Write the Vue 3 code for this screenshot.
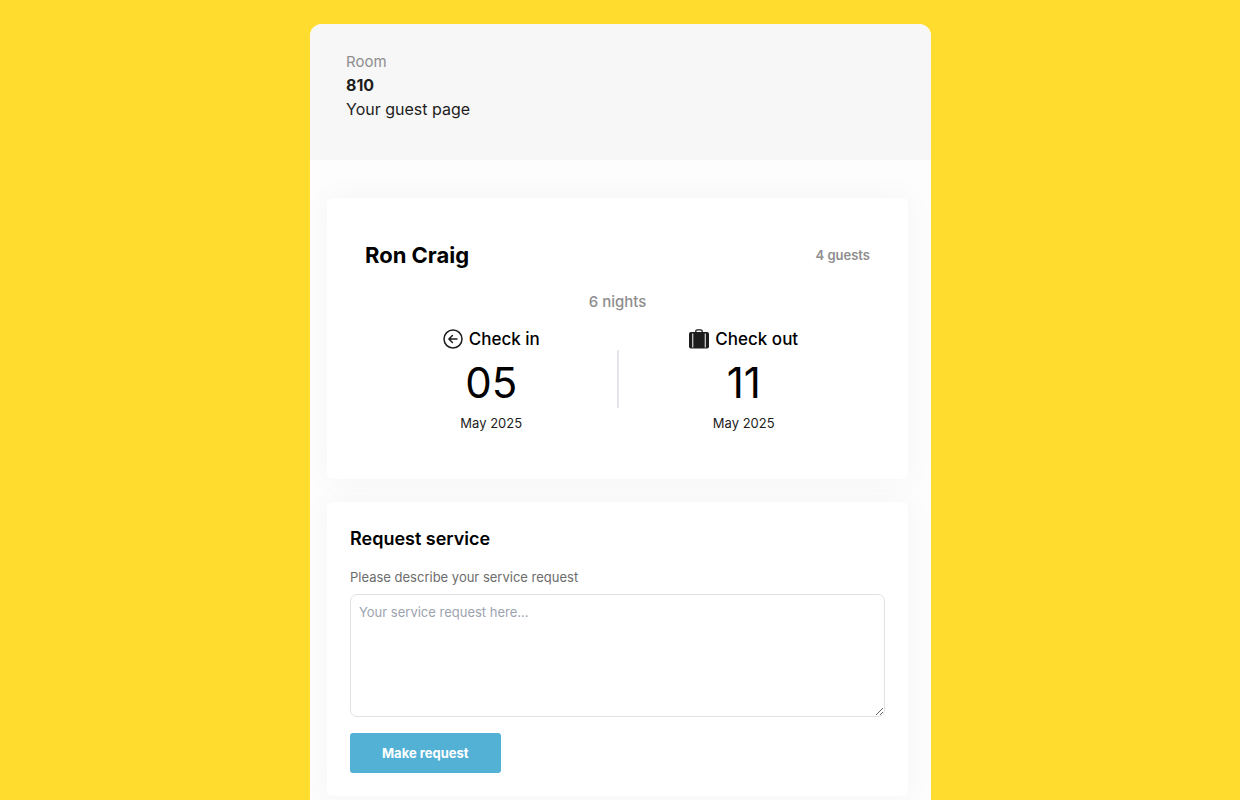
<script setup>
import { ref } from 'vue'

const room = '810'
const guest = { name: 'Ron Craig', party: '4 guests', nights: '6 nights' }
const stay = [
  { id: 'in', label: 'Check in', day: '05', month: 'May 2025' },
  { id: 'out', label: 'Check out', day: '11', month: 'May 2025' },
]
const message = ref('')
</script>

<template>
  <main class="page">
    <header class="room">
      <p class="room-label">Room</p>
      <p class="room-number">{{ room }}</p>
      <p class="room-title">Your guest page</p>
    </header>

    <div class="cards">
      <section class="card booking">
        <div class="booking-head">
          <h1>{{ guest.name }}</h1>
          <span class="party">{{ guest.party }}</span>
        </div>
        <p class="nights">{{ guest.nights }}</p>
        <div class="stay">
          <div v-for="s in stay" :key="s.id" class="stop">
            <h2>
              <svg v-if="s.id === 'in'" class="icon" viewBox="0 0 20 20" fill="none" stroke="#1d1d1d" stroke-width="1.5" stroke-linecap="round" stroke-linejoin="round" aria-hidden="true">
                <circle cx="10" cy="10" r="9" />
                <path d="M14 10H6M9.400 6.500L5.900 10l3.500 3.500" />
              </svg>
              <svg v-else class="icon" viewBox="0 0 20 20" aria-hidden="true">
                <path d="M6.800 4V2.300Q6.800 .8 8.300 .8h3.400q1.500 0 1.500 1.500V4" fill="none" stroke="#1d1d1d" stroke-width="1.300" />
                <rect x="0" y="3" width="20" height="16.500" rx="2" fill="#1d1d1d" />
                <path d="M3.700 4.500v14M16.300 4.500v14" stroke="#c8c8c8" stroke-width="1.300" />
              </svg>
              {{ s.label }}
            </h2>
            <p class="day">{{ s.day }}</p>
            <p class="month">{{ s.month }}</p>
          </div>
        </div>
      </section>

      <form class="card request" @submit.prevent>
        <h2>Request service</h2>
        <label for="message">Please describe your service request</label>
        <textarea id="message" v-model="message" placeholder="Your service request here..."></textarea>
        <button type="submit">Make request</button>
      </form>
    </div>
  </main>
</template>

<style>
body {
  margin: 0;
  background: #ffdc2e;
}
</style>

<style scoped>
.page {
  box-sizing: border-box;
  width: calc(50% + 1px);
  margin: 24px 0 0 25%;
  background: #fdfdfd;
  border-radius: 12px 12px 0 0;
  overflow: hidden;
  font-family: Inter, "Liberation Sans", sans-serif;
  color: #000;
}
h1, h2, p {
  margin: 0;
}
.room {
  padding: 26px 36px 38px;
  background: #f7f7f7;
  line-height: 24px;
  color: #1d1d1d;
}
.room-label {
  font-size: 15px;
  color: #8e8e8e;
}
.room-number {
  font-size: 16px;
  line-height: 22px;
  font-weight: 700;
}
.room-title {
  font-size: 16px;
  line-height: 26px;
}
.cards {
  display: flex;
  flex-direction: column;
  gap: 23px;
  padding: 38px 23px 24px 17px;
}
.card {
  background: #fff;
  border-radius: 6px;
  box-shadow: 0 0 32px rgba(0, 0, 0, 0.04);
}
.booking {
  padding: 40px 38px 46px;
}
.booking-head {
  display: flex;
  align-items: center;
  justify-content: space-between;
}
h1 {
  font-size: 22px;
  line-height: 34px;
  font-weight: 700;
}
.party {
  font-size: 13px;
  font-weight: 600;
  color: #8e8e8e;
}
.nights {
  margin-top: 16px;
  font-size: 15px;
  line-height: 28px;
  font-weight: 500;
  color: #8e8e8e;
  text-align: center;
}
.stay {
  display: grid;
  grid-template-columns: 1fr 1fr;
  margin-top: 11px;
  background: linear-gradient(#e5e5ec, #e5e5ec) center 23px / 2px 58px no-repeat;
}
.stop {
  text-align: center;
}
.stop h2 {
  display: flex;
  align-items: center;
  justify-content: center;
  gap: 6px;
  font-size: 17px;
  line-height: 24px;
  font-weight: 500;
}
.icon {
  width: 20px;
  height: 20px;
}
.day {
  margin-top: 6px;
  font-size: 42px;
  line-height: 52px;
}
.month {
  margin-top: 4px;
  font-size: 13px;
  line-height: 20px;
  color: #1d1d1d;
}
.request {
  display: flex;
  flex-direction: column;
  align-items: flex-start;
  padding: 23px;
}
.request h2 {
  font-size: 18px;
  line-height: 28px;
  font-weight: 600;
}
.request label {
  margin-top: 14px;
  font-size: 13px;
  line-height: 20px;
  color: #6c6c6c;
}
.request textarea {
  box-sizing: border-box;
  width: 100%;
  height: 123px;
  margin-top: 7px;
  padding: 7px 8px;
  border: 1px solid #e1e1e8;
  border-radius: 7px;
  background: #fff;
  font: 13px/20px Inter, "Liberation Sans", sans-serif;
  resize: vertical;
}
.request textarea::placeholder {
  color: #9ca3af;
}
.request button {
  margin-top: 16px;
  padding: 0 32px;
  border: 0;
  border-radius: 3px;
  background: #52b1d5;
  color: #fff;
  font: 700 13px/40px Inter, "Liberation Sans", sans-serif;
}
</style>
